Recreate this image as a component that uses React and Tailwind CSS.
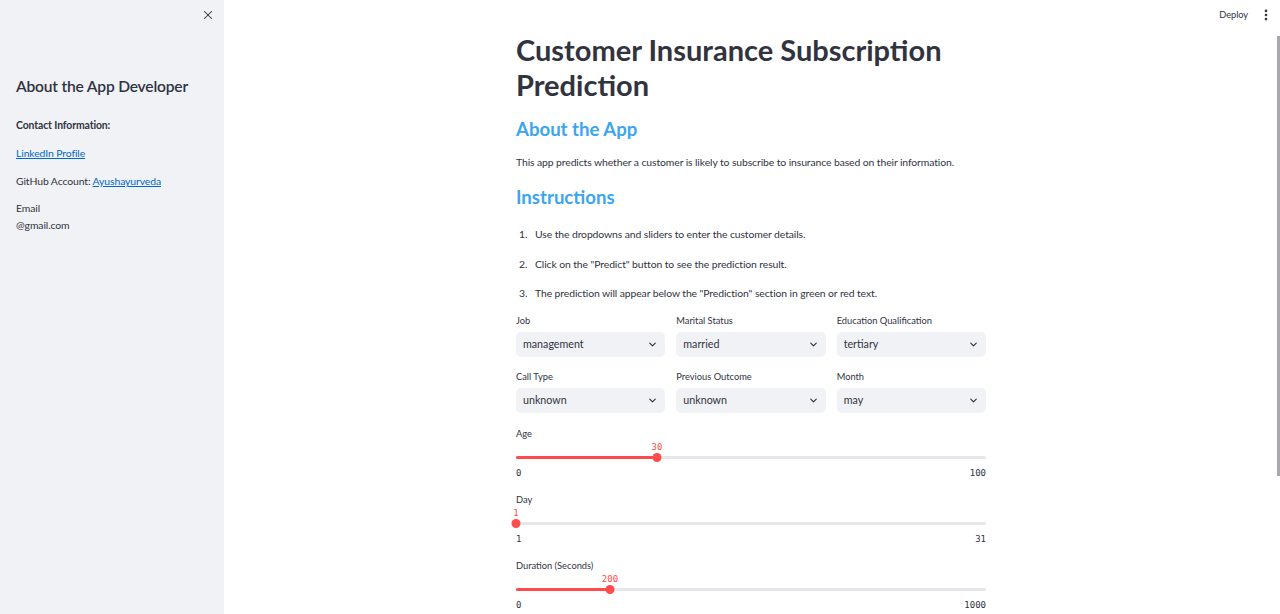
import { ChevronDown, X, EllipsisVertical } from "lucide-react";

const font = { fontFamily: "Lato, 'Noto Sans', sans-serif" };

const Select = ({ label, value }) => (
    <div className="flex flex-col">
        <div className="h-[14px] text-[9.3px] leading-[14px] text-[#31333f]">{label}</div>
        <div className="mt-[4px] h-[25px] rounded-[5px] bg-[#f0f2f6] flex items-center justify-between pl-[7px] pr-[7px]">
            <span className="text-[10.7px] text-[#31333f]">{value}</span>
            <ChevronDown size={11} strokeWidth={2.6} className="text-[#31333f]" />
        </div>
    </div>
);

const Slider = ({ label, min, max, value }) => {
    const pct = ((value - min) / (max - min)) * 100;
    return (
        <div className="flex flex-col">
            <div className="h-[14px] text-[9.3px] leading-[14px] text-[#31333f]">{label}</div>
            <div className="relative h-[12px]">
                <span
                    className="absolute top-0 text-[9px] leading-[13px] text-[#ff4b4b] font-['DejaVu_Sans_Mono',monospace] -translate-x-1/2"
                    style={{ left: `${pct}%` }}
                >
                    {value}
                </span>
            </div>
            <div className="relative h-[8px] flex items-center">
                <div className="w-full h-[3px] rounded-full bg-[#e6e7eb]">
                    <div className="h-full rounded-full bg-[#ff4b4b]" style={{ width: `${pct}%` }} />
                </div>
                <div
                    className="absolute top-0 w-[9px] h-[9px] -mt-[0.5px] rounded-full bg-[#ff4b4b] -translate-x-1/2"
                    style={{ left: `${pct}%` }}
                />
            </div>
            <div className="mt-[6px] flex justify-between text-[9px] leading-[12px] text-[#31333f] font-['DejaVu_Sans_Mono',monospace]">
                <span>{min}</span>
                <span>{max}</span>
            </div>
        </div>
    );
};

export default function App() {
    return (
        <div className="flex w-full h-[614px] overflow-hidden bg-white" style={font}>
            {/* sidebar */}
            <aside className="w-[224px] shrink-0 h-full bg-[#f0f2f6] px-[16px] text-[#31333f]">
                <div className="flex justify-end pt-[8px] -mr-[7px]">
                    <X size={14} strokeWidth={1.8} className="text-[#31333f]" />
                </div>
                <h3 className="mt-[53px] text-[15.6px] leading-[22px] font-semibold tracking-[-0.2px]">About the App Developer</h3>
                <p className="mt-[20px] text-[10.4px] leading-[16px] font-bold tracking-[-0.1px]">Contact Information:</p>
                <p className="mt-[12px] text-[10.4px] leading-[16px] tracking-[-0.1px]">
                    <a className="text-[#0068c9] underline">LinkedIn Profile</a>
                </p>
                <p className="mt-[12px] text-[10.4px] leading-[16px] tracking-[-0.1px]">
                    GitHub Account: <a className="text-[#0068c9] underline">Ayushayurveda</a>
                </p>
                <p className="mt-[11px] text-[10.4px] leading-[17px] tracking-[-0.1px]">
                    Email
                    <br />
                    @gmail.com
                </p>
            </aside>

            {/* main */}
            <main className="relative flex-1 h-full pr-[2px]">
                <div className="absolute top-0 right-0 h-[30px] flex items-center gap-[11px] pr-[7px]">
                    <span className="text-[9.3px] text-[#31333f] tracking-[-0.1px]">Deploy</span>
                    <EllipsisVertical size={14} strokeWidth={2.6} className="text-[#31333f]" />
                </div>
                <div className="absolute right-0 top-[36px] w-[3px] h-[440px] bg-[#a8a8ae]" />

                <div className="mx-auto w-[470px] pt-[32px] text-[#31333f]">
                    <h1 className="text-[29px] leading-[35px] font-bold">
                        Customer Insurance Subscription Prediction
                    </h1>
                    <h2 className="mt-[15px] text-[18.6px] leading-[24px] font-bold text-[#3aa6f0]">About the App</h2>
                    <p className="mt-[13px] text-[10.4px] leading-[16px] tracking-[-0.1px]">
                        This app predicts whether a customer is likely to subscribe to insurance based on their information.
                    </p>
                    <h2 className="mt-[15px] text-[18.6px] leading-[24px] font-bold text-[#3aa6f0]">Instructions</h2>
                    <ol className="mt-[17px] flex flex-col gap-[13.5px] text-[10.4px] leading-[16px] tracking-[-0.1px]">
                        <li className="flex"><span className="w-[19px] pl-[3px]">1.</span>Use the dropdowns and sliders to enter the customer details.</li>
                        <li className="flex"><span className="w-[19px] pl-[3px]">2.</span>Click on the "Predict" button to see the prediction result.</li>
                        <li className="flex"><span className="w-[19px] pl-[3px]">3.</span>The prediction will appear below the "Prediction" section in green or red text.</li>
                    </ol>

                    <div className="mt-[13px] grid grid-cols-3 gap-x-[11px] gap-y-[13px]">
                        <Select label="Job" value="management" />
                        <Select label="Marital Status" value="married" />
                        <Select label="Education Qualification" value="tertiary" />
                        <Select label="Call Type" value="unknown" />
                        <Select label="Previous Outcome" value="unknown" />
                        <Select label="Month" value="may" />
                    </div>

                    <div className="mt-[14px] flex flex-col gap-[14px]">
                        <Slider label="Age" min={0} max={100} value={30} />
                        <Slider label="Day" min={1} max={31} value={1} />
                        <Slider label="Duration (Seconds)" min={0} max={1000} value={200} />
                    </div>
                </div>
            </main>
        </div>
    );
}
